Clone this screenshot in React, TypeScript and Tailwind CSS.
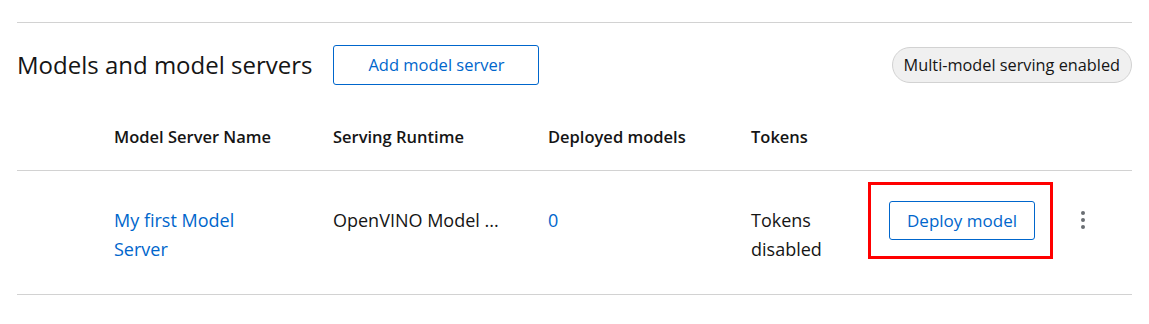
import React from 'react';

const cols = 'grid grid-cols-[97px_219px_215px_203px_117px_185px_1fr]';

function Kebab() {
  return (
    <button className="ml-[26px] flex h-[20px] w-[8px] flex-col items-center justify-between py-[1px]" aria-label="Actions">
      <span className="h-[4px] w-[4px] rounded-full bg-[#6a6e73]" />
      <span className="h-[4px] w-[4px] rounded-full bg-[#6a6e73]" />
      <span className="h-[4px] w-[4px] rounded-full bg-[#6a6e73]" />
    </button>
  );
}

export default function App() {
  return (
    <div className="min-h-[324px] bg-white px-[17px] pt-[22px] font-['Open_Sans','Liberation_Sans',sans-serif] text-[#151515]">
      <section className="border-t border-[#d2d2d2]">
        <div className="mt-[22px] flex h-[40px] items-center">
          <h2 className="text-[24px] leading-none">Models and model servers</h2>
          <button className="ml-[21px] h-[40px] w-[206px] rounded-[3px] border border-[#0066cc] text-[16.5px] text-[#0066cc]">
            Add model server
          </button>
          <span className="ml-auto flex h-[36px] items-center rounded-full border border-[#d2d2d2] bg-[#f0f0f0] px-[11px] text-[16.3px]">
            Multi-model serving enabled
          </span>
        </div>

        <div className={`${cols} mt-[20px] h-[66px] items-center border-b border-[#d2d2d2] text-[16.5px] font-semibold`}>
          <div />
          <div>Model Server Name</div>
          <div>Serving Runtime</div>
          <div>Deployed models</div>
          <div>Tokens</div>
          <div />
          <div />
        </div>

        <div className={`${cols} h-[124px] border-b border-[#d2d2d2] text-[18px] leading-[29px]`}>
          <div />
          <div className="pt-[35px]">
            <a href="#" className="text-[#0066cc]">
              My first Model
              <br />
              Server
            </a>
          </div>
          <div className="whitespace-nowrap pt-[35px]">OpenVINO Model ...</div>
          <div className="pt-[35px] text-[#0066cc]">0</div>
          <div className="pt-[35px]">
            Tokens
            <br />
            disabled
          </div>
          <div className="pt-[11px]">
            <div className="border-[3px] border-[#ff0000] py-[16px] pr-[15px] pl-[18px]">
              <button className="h-[39px] w-[146px] rounded-[3px] border border-[#0066cc] text-[17px] text-[#0066cc]">
                Deploy model
              </button>
            </div>
          </div>
          <div className="flex items-start pt-[39px]">
            <Kebab />
          </div>
        </div>
      </section>
    </div>
  );
}
